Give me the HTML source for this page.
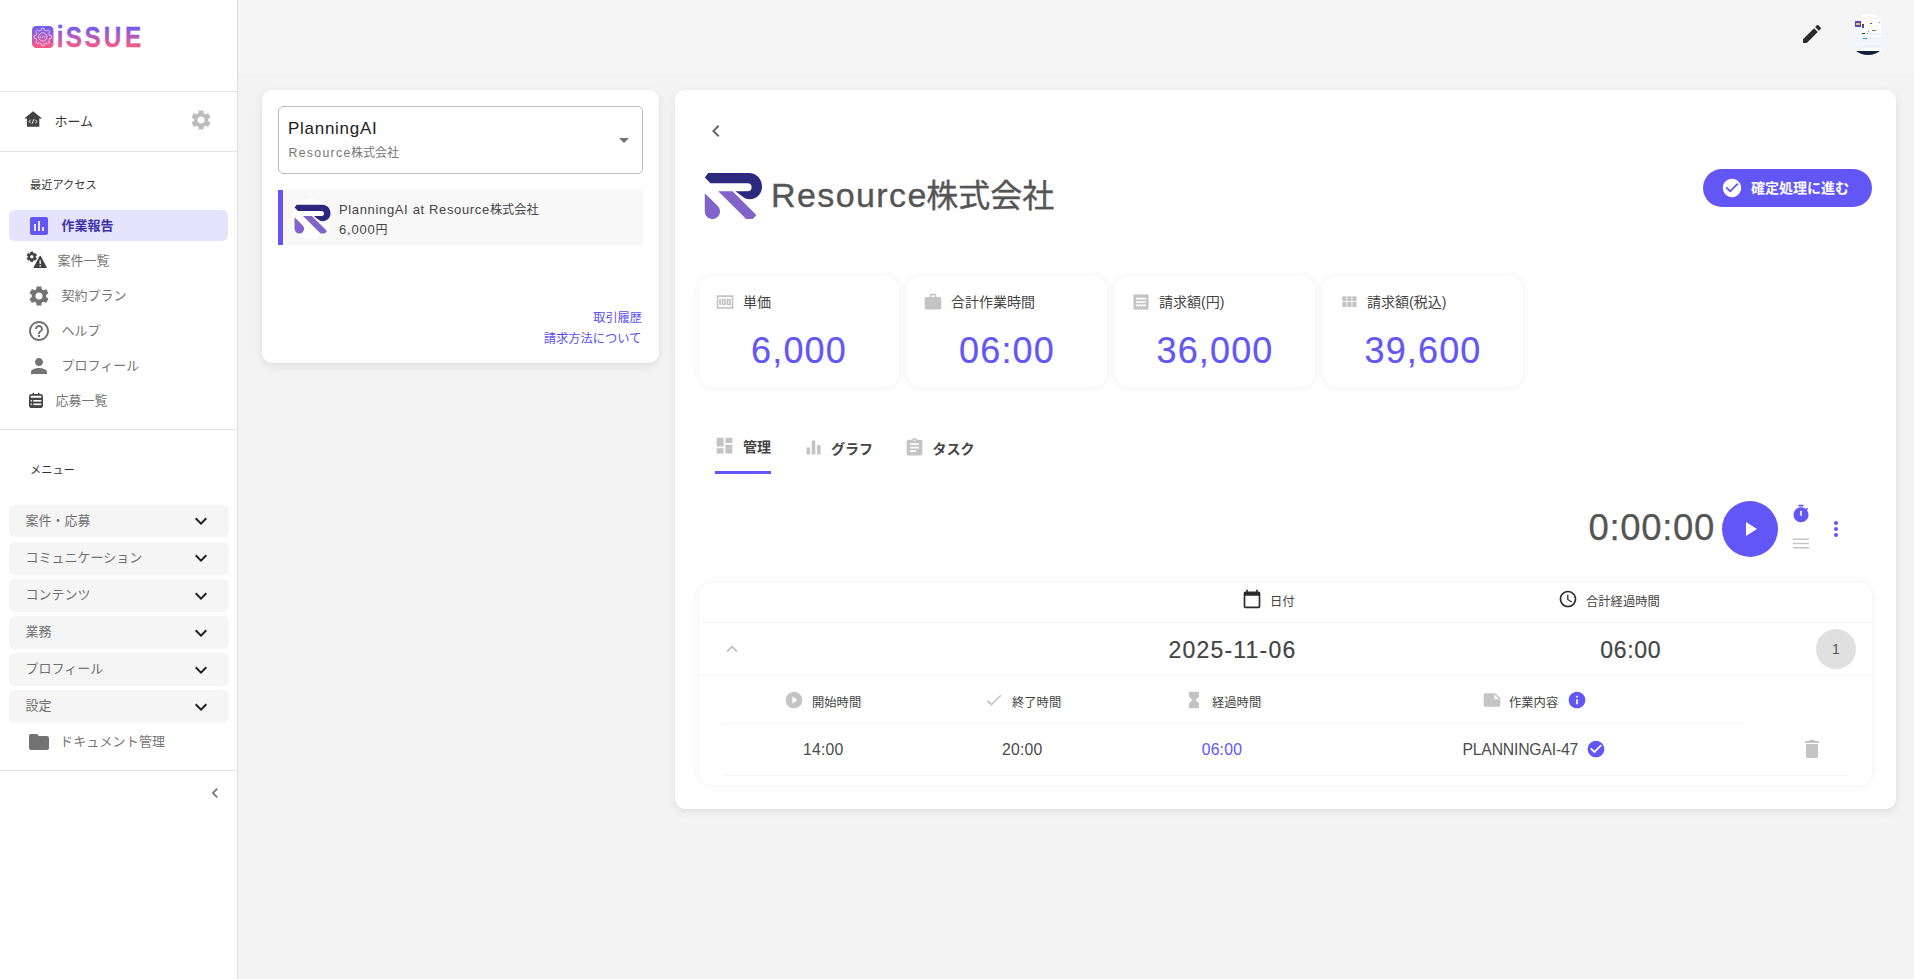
<!DOCTYPE html>
<html lang="ja">
<head>
<meta charset="utf-8">
<title>作業報告 - iSSUE</title>
<style>
*{box-sizing:border-box;margin:0;padding:0}
html,body{width:1914px;height:979px;overflow:hidden}
body{background:#f3f3f3;font-family:"Liberation Sans","Noto Sans CJK JP",sans-serif;color:#555;position:relative;-webkit-font-smoothing:antialiased}
.abs{position:absolute}
.t{position:absolute;white-space:nowrap;line-height:1}
svg{display:block}
.ic{position:absolute}
/* sidebar */
#side{position:absolute;left:0;top:0;width:238px;height:979px;background:#fff;border-right:1px solid #e0e0e0}
.hr{position:absolute;left:0;width:237px;height:1px;background:#e2e2e2}
.nav{position:absolute;margin-top:1px;margin-left:.5px;font-size:13px;color:#757575;white-space:nowrap;line-height:1}
.acc{position:absolute;left:9px;width:220px;height:32.8px;background:#f5f5f5;border-radius:6px}
.acc span{position:absolute;left:16.5px;top:9px;font-size:13px;line-height:1;color:#707070;white-space:nowrap}
.acc svg{position:absolute;left:180.3px;top:4.6px}
/* topbar */
#top{position:absolute;left:238px;top:0;width:1676px;height:74px;background:#f5f5f5}
/* cards */
.card{position:absolute;background:#fff;border-radius:10px;box-shadow:0 3px 9px rgba(60,70,90,.10),0 1px 2px rgba(60,70,90,.03)}
.stat{position:absolute;width:200px;height:111px;background:#fff;border-radius:14px;box-shadow:0 0 10px rgba(0,0,0,.06)}
.stat .lb{position:absolute;left:44px;top:19px;font-size:14px;line-height:1;color:#444;white-space:nowrap}
.stat .v{position:absolute;left:0px;width:200px;top:56.5px;text-align:center;font-size:36px;line-height:1;color:#6356f7;letter-spacing:1.15px;-webkit-text-stroke:.2px #6356f7}
.stat svg{position:absolute;left:16px;top:16px}
.tab{position:absolute;font-size:14px;font-weight:bold;color:#444;line-height:1;white-space:nowrap}
.th{position:absolute;font-size:12.3px;color:#444;line-height:1;white-space:nowrap}
.td{position:absolute;font-size:15.75px;color:#4c4c4c;line-height:1;white-space:nowrap}
.ln{position:absolute;height:1px;background:#f7f7f7}
</style>
</head>
<body>
<!-- TOPBAR -->
<div id="top">
  <svg class="ic" style="left:1562px;top:22px" width="24" height="24" viewBox="0 0 24 24"><path fill="#2b2b2b" d="M3 17.250V21h3.750L17.810 9.940l-3.750-3.750L3 17.250zM20.710 7.040c.390-.390.390-1.020 0-1.410l-2.340-2.340c-.390-.390-1.020-.390-1.410 0l-1.830 1.830 3.750 3.750 1.830-1.830z"/></svg>
  <div class="abs" style="left:1610px;top:14px;width:40px;height:41px;border-radius:50%;background:#f2f5f9;overflow:hidden">
    <div class="abs" style="left:13.500px;top:0;width:19.500px;height:37px;background:#fff"></div>
    <div class="abs" style="left:13.500px;top:3.500px;width:19.500px;height:1px;background:#f0f4f8"></div>
    <div class="abs" style="left:13.500px;top:19px;width:19.500px;height:1.500px;background:#f0f4f8"></div>
    <div class="abs" style="left:13.500px;top:23px;width:19.500px;height:5.500px;background:#f0f4f8"></div>
    <div class="abs" style="left:13.500px;top:30px;width:19.500px;height:4px;background:#f0f4f8"></div>
    <div class="abs" style="left:6.800px;top:7px;width:6.200px;height:6px;background:#5a3fd6"></div>
    <div class="abs" style="left:8px;top:9.300px;width:4px;height:2px;background:#f5c342"></div>
    <div class="abs" style="left:14px;top:11px;width:2px;height:2.500px;background:#555"></div>
    <div class="abs" style="left:21.500px;top:9px;width:2px;height:1px;background:#666"></div>
    <div class="abs" style="left:14px;top:9.500px;width:1.500px;height:1px;background:#444"></div>
    <div class="abs" style="left:31px;top:8px;width:1.200px;height:1.200px;background:#7a5cf0"></div>
    <div class="abs" style="left:19.500px;top:17px;width:1.500px;height:1.200px;background:#e8452c"></div>
    <div class="abs" style="left:24px;top:16px;width:3.500px;height:1px;background:#777"></div>
    <div class="abs" style="left:14px;top:19px;width:2.500px;height:1.200px;background:#333"></div>
    <div class="abs" style="left:18.500px;top:19px;width:1.500px;height:1px;background:#999"></div>
    <div class="abs" style="left:15px;top:24px;width:3.500px;height:1.200px;background:#1aa3f5"></div>
    <div class="abs" style="left:0;top:36.800px;width:40px;height:6px;background:#13203a"></div>
  </div>
</div>
<!-- SIDEBAR -->
<div id="side">
  <div id="logo">
    <svg class="ic" style="left:32px;top:26px" width="22" height="22" viewBox="0 0 22 22">
      <defs><linearGradient id="lg" x1="0" y1="0" x2="0" y2="1"><stop offset="0" stop-color="#6a5cf7"/><stop offset="1" stop-color="#ff5a83"/></linearGradient></defs>
      <rect x="0" y="0" width="21.500" height="22" rx="4.200" fill="url(#lg)"/>
      <path d="M9.25 4.18L9.51 2.30A8.7 8.7 0 0 1 12.09 2.30L12.35 4.18A6.9 6.9 0 0 1 14.46 5.05L15.97 3.91A8.7 8.7 0 0 1 17.79 5.73L16.65 7.24A6.9 6.9 0 0 1 17.52 9.35L19.40 9.61A8.7 8.7 0 0 1 19.40 12.19L17.52 12.45A6.9 6.9 0 0 1 16.65 14.56L17.79 16.07A8.7 8.7 0 0 1 15.97 17.89L14.46 16.75A6.9 6.9 0 0 1 12.35 17.62L12.09 19.50A8.7 8.7 0 0 1 9.51 19.50L9.25 17.62A6.9 6.9 0 0 1 7.14 16.75L5.63 17.89A8.7 8.7 0 0 1 3.81 16.07L4.95 14.56A6.9 6.9 0 0 1 4.08 12.45L2.20 12.19A8.7 8.7 0 0 1 2.20 9.61L4.08 9.35A6.9 6.9 0 0 1 4.95 7.24L3.81 5.73A8.7 8.7 0 0 1 5.63 3.91L7.14 5.05A6.9 6.9 0 0 1 9.25 4.18z" fill="none" stroke="#fff" stroke-opacity=".85" stroke-width=".75" stroke-linejoin="round"/>
      <circle cx="10.800" cy="10.900" r="4.200" fill="none" stroke="#fff" stroke-opacity=".85" stroke-width=".750"/>
      <path d="M9.300 9.800L8.200 10.900l1.100 1.100M12.300 9.800l1.100 1.100-1.100 1.100M11.300 9.500L10.300 12.300" fill="none" stroke="#fff" stroke-opacity=".85" stroke-width=".600"/>
    </svg>
    <svg class="ic" style="left:50px;top:20px" width="100" height="34" viewBox="0 0 100 34">
      <defs><linearGradient id="lg2" x1="0" y1="6" x2="0" y2="28" gradientUnits="userSpaceOnUse"><stop offset="0" stop-color="#6a5cf7"/><stop offset="1" stop-color="#ff5a83"/></linearGradient></defs>
      <text transform="scale(0.82,1)" x="8.29 19.09 42.14 65.6 91.4" y="27.5" font-family="'Liberation Sans',sans-serif" font-weight="bold" font-size="29.6" fill="url(#lg2)" stroke="url(#lg2)" stroke-width=".4" stroke-linejoin="round">iSSUE</text>
    </svg>
  </div>
  <div class="hr" style="top:91px"></div>
  <div id="home">
    <svg class="ic" style="left:23px;top:109px" width="20" height="20" viewBox="0 0 20 20">
      <path d="M10 2.200L1.200 9.500h2.700V17.800h12.400V9.500h2.900z" fill="#424242"/>
      <path d="M7.800 10.700L6 12.500l1.800 1.800M12.200 10.700l1.800 1.800-1.800 1.800M10.800 10.300L9.200 14.700" fill="none" stroke="#fff" stroke-width="1"/>
    </svg>
    <div class="t" style="left:54.500px;top:115px;font-size:13px;color:#333">ホーム</div>
    <svg class="ic" style="left:189px;top:108px" width="24" height="24" viewBox="0 0 24 24"><path fill="#bdbdbd" d="M19.14 12.94c.04-.3.06-.61.06-.94 0-.32-.02-.64-.07-.94l2.03-1.58c.18-.14.23-.41.12-.61l-1.92-3.32c-.12-.22-.37-.29-.59-.22l-2.39.96c-.5-.38-1.03-.7-1.62-.94l-.36-2.54c-.04-.24-.24-.41-.48-.41h-3.84c-.24 0-.43.17-.47.41l-.36 2.54c-.59.24-1.13.57-1.62.94l-2.39-.96c-.22-.08-.47 0-.59.22L2.74 8.87c-.12.21-.08.47.12.61l2.03 1.58c-.05.3-.09.63-.09.94s.02.64.07.94l-2.03 1.58c-.18.14-.23.41-.12.61l1.92 3.32c.12.22.37.29.59.22l2.39-.96c.5.38 1.03.7 1.62.94l.36 2.54c.05.24.24.41.48.41h3.84c.24 0 .44-.17.47-.41l.36-2.54c.59-.24 1.13-.56 1.62-.94l2.39.96c.22.08.47 0 .59-.22l1.92-3.32c.12-.22.07-.47-.12-.61l-2.01-1.58zM12 15.6c-1.98 0-3.6-1.62-3.6-3.6s1.62-3.6 3.6-3.6 3.6 1.62 3.6 3.6-1.62 3.6-3.6 3.6z"/></svg>
  </div>
  <div class="hr" style="top:151px"></div>
  <div id="recent">
    <div class="t" style="left:30px;top:179.500px;font-size:11.200px;color:#333">最近アクセス</div>
    <div class="abs" style="left:9px;top:210px;width:219px;height:31px;background:#e6e4fc;border-radius:6px"></div>
    <svg class="ic" style="left:27px;top:214px" width="24" height="24" viewBox="0 0 24 24"><path fill="#6356f7" d="M19 3H5c-1.1 0-2 .9-2 2v14c0 1.1.9 2 2 2h14c1.1 0 2-.9 2-2V5c0-1.1-.9-2-2-2zM9 17H7v-7h2v7zm4 0h-2V7h2v10zm4 0h-2v-4h2v4z"/></svg>
    <div class="nav" style="left:61px;top:218px;color:#3b32a8;font-weight:bold">作業報告</div>
    <svg class="ic" style="left:26px;top:251px" width="22" height="20" viewBox="0 0 22 20">
      <g transform="translate(-.2,-.2) scale(.5)"><path fill="#424242" stroke="#424242" stroke-width="1.6" d="M19.14 12.94c.04-.3.06-.61.06-.94 0-.32-.02-.64-.07-.94l2.03-1.58c.18-.14.23-.41.12-.61l-1.92-3.32c-.12-.22-.37-.29-.59-.22l-2.39.96c-.5-.38-1.03-.7-1.62-.94l-.36-2.54c-.04-.24-.24-.41-.48-.41h-3.84c-.24 0-.43.17-.47.41l-.36 2.54c-.59.24-1.13.57-1.62.94l-2.39-.96c-.22-.08-.47 0-.59.22L2.74 8.87c-.12.21-.08.47.12.61l2.03 1.58c-.05.3-.09.63-.09.94s.02.64.07.94l-2.03 1.58c-.18.14-.23.41-.12.61l1.92 3.32c.12.22.37.29.59.22l2.39-.96c.5.38 1.03.7 1.62.94l.36 2.54c.05.24.24.41.48.41h3.84c.24 0 .44-.17.47-.41l.36-2.54c.59-.24 1.13-.56 1.62-.94l2.39.96c.22.08.47 0 .59-.22l1.92-3.32c.12-.22.07-.47-.12-.61l-2.01-1.58zM12 15.6c-1.98 0-3.6-1.62-3.6-3.6s1.62-3.6 3.6-3.6 3.6 1.62 3.6 3.6-1.62 3.6-3.6 3.6z"/></g>
      <circle cx="5.800" cy="5.800" r="1.500" fill="#fff"/>
      <path fill="#424242" stroke="#424242" stroke-width="1.200" stroke-linejoin="round" d="M14.200 5.300L20.200 16.500H8.200z"/>
      <path d="M14.200 9.200v3.800M14.200 14.100v1.400" stroke="#fff" stroke-width="1.300" fill="none"/>
    </svg>
    <div class="nav" style="left:57px;top:253px">案件一覧</div>
    <svg class="ic" style="left:27px;top:284px" width="24" height="24" viewBox="0 0 24 24"><path fill="#737373" d="M19.14 12.94c.04-.3.06-.61.06-.94 0-.32-.02-.64-.07-.94l2.03-1.58c.18-.14.23-.41.12-.61l-1.92-3.32c-.12-.22-.37-.29-.59-.22l-2.39.96c-.5-.38-1.03-.7-1.62-.94l-.36-2.54c-.04-.24-.24-.41-.48-.41h-3.84c-.24 0-.43.17-.47.41l-.36 2.54c-.59.24-1.13.57-1.62.94l-2.39-.96c-.22-.08-.47 0-.59.22L2.74 8.87c-.12.21-.08.47.12.61l2.03 1.58c-.05.3-.09.63-.09.94s.02.64.07.94l-2.03 1.58c-.18.14-.23.41-.12.61l1.92 3.32c.12.22.37.29.59.22l2.39-.96c.5.38 1.03.7 1.62.94l.36 2.54c.05.24.24.41.48.41h3.84c.24 0 .44-.17.47-.41l.36-2.54c.59-.24 1.13-.56 1.62-.94l2.39.96c.22.08.47 0 .59-.22l1.92-3.32c.12-.22.07-.47-.12-.61l-2.01-1.58zM12 15.6c-1.98 0-3.6-1.62-3.6-3.6s1.62-3.6 3.6-3.6 3.6 1.62 3.6 3.6-1.62 3.6-3.6 3.6z"/></svg>
    <div class="nav" style="left:61px;top:288px">契約プラン</div>
    <svg class="ic" style="left:27px;top:319px" width="24" height="24" viewBox="0 0 24 24"><path fill="#737373" d="M11 18h2v-2h-2v2zm1-16C6.48 2 2 6.48 2 12s4.48 10 10 10 10-4.48 10-10S17.52 2 12 2zm0 18c-4.41 0-8-3.59-8-8s3.59-8 8-8 8 3.590 8 8-3.590 8-8 8zm0-14c-2.210 0-4 1.790-4 4h2c0-1.100.900-2 2-2s2 .900 2 2c0 2-3 1.750-3 5h2c0-2.250 3-2.500 3-5 0-2.210-1.790-4-4-4z"/></svg>
    <div class="nav" style="left:61px;top:323px">ヘルプ</div>
    <svg class="ic" style="left:27px;top:354px" width="24" height="24" viewBox="0 0 24 24"><path fill="#737373" d="M12 12c2.210 0 4-1.790 4-4s-1.790-4-4-4-4 1.790-4 4 1.790 4 4 4zm0 2c-2.670 0-8 1.340-8 4v2h16v-2c0-2.660-5.330-4-8-4z"/></svg>
    <div class="nav" style="left:61px;top:358px">プロフィール</div>
    <svg class="ic" style="left:28px;top:392px" width="16" height="17" viewBox="0 0 16 17">
      <rect x="1" y="2" width="14" height="14" rx="2.800" fill="#454545"/>
      <rect x="4.600" y=".800" width="1.500" height="2.500" fill="#454545"/><rect x="9.900" y=".800" width="1.500" height="2.500" fill="#454545"/>
      <rect x="2.700" y="3.700" width="10.600" height="2.100" rx=".600" fill="#fff"/>
      <rect x="2.700" y="8" width="1.200" height="1.600" fill="#fff"/><rect x="5.300" y="8" width="8" height="1.600" fill="#fff"/>
      <rect x="2.700" y="11.500" width="1.200" height="1.600" fill="#fff"/><rect x="5.300" y="11.500" width="8" height="1.600" fill="#fff"/>
    </svg>
    <div class="nav" style="left:55px;top:393px">応募一覧</div>
  </div>
  <div class="hr" style="top:429px"></div>
  <div id="menu">
    <div class="t" style="left:30px;top:465px;font-size:11.200px;color:#333">メニュー</div>
    <div class="acc" style="top:504.7px"><span>案件・応募</span><svg width="24" height="24" viewBox="0 0 24 24"><path fill="#222" d="M16.590 8.590L12 13.170 7.410 8.590 6 10l6 6 6-6z"/></svg></div>
    <div class="acc" style="top:541.82px"><span>コミュニケーション</span><svg width="24" height="24" viewBox="0 0 24 24"><path fill="#222" d="M16.590 8.590L12 13.170 7.410 8.590 6 10l6 6 6-6z"/></svg></div>
    <div class="acc" style="top:578.94px"><span>コンテンツ</span><svg width="24" height="24" viewBox="0 0 24 24"><path fill="#222" d="M16.590 8.590L12 13.170 7.410 8.590 6 10l6 6 6-6z"/></svg></div>
    <div class="acc" style="top:616.06px"><span>業務</span><svg width="24" height="24" viewBox="0 0 24 24"><path fill="#222" d="M16.590 8.590L12 13.170 7.410 8.590 6 10l6 6 6-6z"/></svg></div>
    <div class="acc" style="top:653.18px"><span>プロフィール</span><svg width="24" height="24" viewBox="0 0 24 24"><path fill="#222" d="M16.590 8.590L12 13.170 7.410 8.590 6 10l6 6 6-6z"/></svg></div>
    <div class="acc" style="top:690.3px"><span>設定</span><svg width="24" height="24" viewBox="0 0 24 24"><path fill="#222" d="M16.590 8.590L12 13.170 7.410 8.590 6 10l6 6 6-6z"/></svg></div>
    <svg class="ic" style="left:27px;top:730px" width="24" height="24" viewBox="0 0 24 24"><path fill="#737373" d="M10 4H4c-1.100 0-1.990.900-1.990 2L2 18c0 1.100.900 2 2 2h16c1.100 0 2-.900 2-2V8c0-1.100-.900-2-2-2h-8l-2-2z"/></svg>
    <div class="nav" style="left:59.500px;top:734px;letter-spacing:.15px">ドキュメント管理</div>
  </div>
  <div class="hr" style="top:770px"></div>
  <div id="collapse"><svg class="ic" style="left:205.3px;top:783.3px" width="20" height="20" viewBox="0 0 24 24"><path fill="#737373" d="M15.410 7.410L14 6l-6 6 6 6 1.410-1.410L10.830 12z"/></svg></div>
</div>
<!-- LEFT CARD -->
<div class="card" id="lcard" style="left:262px;top:90px;width:397px;height:273px">
  <div class="abs" style="left:16px;top:16px;width:365px;height:68px;border:1px solid #bdbdbd;border-radius:5px"></div>
  <div class="t" style="left:26px;top:30px;font-size:17px;color:#222;letter-spacing:.72px">PlanningAI</div>
  <div class="t" style="left:26.5px;top:57px;font-size:12.3px;color:#777"><span style="letter-spacing:1.3px">Resource</span><span style="font-size:12px;margin-left:-.5px">株式会社</span></div>
  <svg class="ic" style="left:350px;top:38px" width="24" height="24" viewBox="0 0 24 24"><path fill="#737373" d="M7 10l5 5 5-5z"/></svg>
  <div class="abs" style="left:16px;top:100px;width:365px;height:55px;background:#f8f8f8;border-left:5px solid #6356f7"></div>
  <div class="abs" style="left:29px;top:109px;width:40px;height:40px;border-radius:50%;background:#fff"></div>
  <svg class="ic" style="left:32px;top:114px" width="37.8" height="30.2" viewBox="0 0 60 48"><path fill="#2c287e" d="M0.800 5.500L4.200 1.100H44.500C53 1.100 58 7.500 58 14.800C58 22 52.500 27.300 45.600 27.300C42.500 27.300 40.200 25.800 38.500 24.500L31.400 19.200H43.600A4 4 0 0 0 43.600 11.200H6.400z"/><path fill="#8264c8" d="M14.200 19.200H28.500L52.400 43L48.900 46.900H42.100z"/><path fill="#8264c8" d="M0.800 21.200L13.800 34.100A7.600 7.600 0 1 1 0.800 39.400z"/></svg>
  <div class="t" style="left:77px;top:113px;font-size:13px;color:#444"><span style="letter-spacing:.65px">PlanningAI at Resource</span><span style="font-size:12.2px">株式会社</span></div>
  <div class="t" style="left:77px;top:133px;font-size:13px;color:#444"><span style="letter-spacing:.8px">6,000</span><span style="font-size:12px">円</span></div>
  <div class="t" style="right:17px;top:222px;font-size:12.2px;color:#5b4ff0">取引履歴</div>
  <div class="t" style="right:17.5px;top:243px;font-size:12.25px;color:#5b4ff0">請求方法について</div>
</div>
<!-- RIGHT CARD -->
<div class="card" id="rcard" style="left:675px;top:90px;width:1221px;height:719px">
  <svg class="ic" style="left:29px;top:29px" width="24" height="24" viewBox="0 0 24 24"><path fill="#666" d="M15.410 7.410L14 6l-6 6 6 6 1.410-1.410L10.830 12z"/></svg>
  <svg class="ic" style="left:29px;top:82px" width="60" height="48" viewBox="0 0 60 48"><path fill="#2c287e" d="M0.800 5.500L4.200 1.100H44.500C53 1.100 58 7.500 58 14.800C58 22 52.500 27.300 45.600 27.300C42.500 27.300 40.200 25.800 38.500 24.500L31.400 19.200H43.600A4 4 0 0 0 43.600 11.200H6.400z"/><path fill="#8264c8" d="M14.200 19.200H28.500L52.400 43L48.900 46.900H42.100z"/><path fill="#8264c8" d="M0.800 21.200L13.800 34.100A7.600 7.600 0 1 1 0.800 39.400z"/></svg>
  <div class="t" style="left:96px;top:87.5px;font-size:34px;color:#555;-webkit-text-stroke:.35px #555"><span style="letter-spacing:1.4px">Resource</span><span style="font-size:32px;margin-left:-1.5px">株式会社</span></div>
  <div class="abs" style="left:1028px;top:79px;width:169px;height:38px;border-radius:19px;background:#6356f7"></div>
  <svg class="ic" style="left:1046px;top:87px" width="22" height="22" viewBox="0 0 24 24"><path fill="#fff" d="M12 2C6.480 2 2 6.480 2 12s4.480 10 10 10 10-4.480 10-10S17.520 2 12 2zm-2 15l-5-5 1.410-1.410L10 14.170l7.590-7.590L19 8l-9 9z"/></svg>
  <div class="t" style="left:1076px;top:91px;font-size:14px;font-weight:bold;color:#fff">確定処理に進む</div>
  <div class="stat" style="left:24px;top:186px"><svg width="20" height="20" viewBox="0 0 24 24"><path fill="#c4c4c4" d="M5 8h2v8H5zm7 0H9c-.550 0-1 .450-1 1v6c0 .550.450 1 1 1h3c.550 0 1-.450 1-1V9c0-.550-.450-1-1-1zm-1 6h-1v-4h1v4zm7-6h-3c-.550 0-1 .450-1 1v6c0 .550.450 1 1 1h3c.550 0 1-.450 1-1V9c0-.550-.450-1-1-1zm-1 6h-1v-4h1v4zM2 4v16h20V4H2zm2 14V6h16v12H4z"/></svg><div class="lb">単価</div><div class="v">6,000</div></div>
  <div class="stat" style="left:232px;top:186px"><svg width="20" height="20" viewBox="0 0 24 24"><path fill="#c4c4c4" d="M20 6h-4V4c0-1.110-.890-2-2-2h-4c-1.110 0-2 .890-2 2v2H4c-1.110 0-1.990.890-1.990 2L2 19c0 1.110.890 2 2 2h16c1.110 0 2-.890 2-2V8c0-1.110-.890-2-2-2zm-6 0h-4V4h4v2z"/></svg><div class="lb">合計作業時間</div><div class="v">06:00</div></div>
  <div class="stat" style="left:440px;top:186px"><svg width="20" height="20" viewBox="0 0 24 24"><path fill="#c4c4c4" d="M18 17H6v-2h12v2zm0-4H6v-2h12v2zm0-4H6V7h12v2zM3 22l1.500-1.500L6 22l1.500-1.500L9 22l1.500-1.500L12 22l1.500-1.500L15 22l1.500-1.500L18 22l1.500-1.500L21 22V2l-1.500 1.500L18 2l-1.500 1.500L15 2l-1.500 1.500L12 2l-1.500 1.500L9 2 7.500 3.500 6 2 4.500 3.500 3 2v20z"/></svg><div class="lb">請求額(円)</div><div class="v">36,000</div></div>
  <div class="stat" style="left:648px;top:186px"><svg width="20" height="20" viewBox="0 0 24 24"><path fill="#c4c4c4" d="M4 11h5V5H4v6zm0 7h5v-6H4v6zm6 0h5v-6h-5v6zm6 0h5v-6h-5v6zm-6-7h5V5h-5v6zm6-6v6h5V5h-5z"/></svg><div class="lb">請求額(税込)</div><div class="v">39,600</div></div>
  <svg class="ic" style="left:39.39999999999998px;top:344.5px" width="21" height="21" viewBox="0 0 24 24"><path fill="#c4c4c4" d="M3 13h8V3H3v10zm0 8h8v-6H3v6zm10 0h8V11h-8v10zm0-18v6h8V3h-8z"/></svg>
  <div class="tab" style="left:68px;top:350px">管理</div>
  <div class="abs" style="left:40px;top:381px;width:56px;height:3px;background:#6356f7"></div>
  <svg class="ic" style="left:127.60000000000002px;top:346.5px" width="21" height="21" viewBox="0 0 24 24"><path fill="#c4c4c4" d="M10 20h4V4h-4v16zm-6 0h4v-8H4v8zM16 9v11h4V9h-4z"/></svg>
  <div class="tab" style="left:156px;top:352px">グラフ</div>
  <svg class="ic" style="left:229.39999999999998px;top:346.8px" width="21" height="21" viewBox="0 0 24 24"><path fill="#c4c4c4" d="M19 3h-4.180C14.400 1.840 13.300 1 12 1c-1.300 0-2.400.840-2.820 2H5c-1.100 0-2 .900-2 2v14c0 1.100.900 2 2 2h14c1.100 0 2-.900 2-2V5c0-1.100-.900-2-2-2zm-7 0c.550 0 1 .450 1 1s-.450 1-1 1-1-.450-1-1 .450-1 1-1zm2 14H7v-2h7v2zm3-4H7v-2h10v2zm0-4H7V7h10v2z"/></svg>
  <div class="tab" style="left:257.5px;top:352px">タスク</div>
  <div class="t" style="left:913.5px;top:419.5px;font-size:36.5px;color:#555;letter-spacing:.65px;-webkit-text-stroke:.25px #555">0:00:00</div>
  <div class="abs" style="left:1047px;top:411px;width:56px;height:56px;border-radius:50%;background:#6356f7"></div>
  <svg class="ic" style="left:1063px;top:427px" width="24" height="24" viewBox="0 0 24 24"><path fill="#fff" d="M8 5v14l11-7z"/></svg>
  <svg class="ic" style="left:1116px;top:414px" width="20" height="20" viewBox="0 0 24 24"><path fill="#6356f7" d="M9 1h6v2H9zm10.030 6.390l1.420-1.420c-.430-.510-.900-.990-1.410-1.410l-1.420 1.420C16.070 4.740 14.120 4 12 4c-4.970 0-9 4.030-9 9s4.020 9 9 9 9-4.030 9-9c0-2.120-.740-4.070-1.970-5.610zM13 14h-2V8h2v6z"/></svg>
  <svg class="ic" style="left:1117px;top:448px" width="18" height="12" viewBox="0 0 18 12"><path d="M0.800 1.300h16.200M0.800 5.550h16.200M0.800 9.750h16.200" stroke="#c6c6c6" stroke-width="1.400"/></svg>
  <svg class="ic" style="left:1149px;top:427px" width="24" height="24" viewBox="0 0 24 24"><path fill="#6356f7" d="M12 8c1.100 0 2-.900 2-2s-.900-2-2-2-2 .900-2 2 .900 2 2 2zm0 2c-1.100 0-2 .900-2 2s.900 2 2 2 2-.900 2-2-.900-2-2-2zm0 6c-1.100 0-2 .900-2 2s.900 2 2 2 2-.900 2-2-.900-2-2-2z"/></svg>
  <div class="abs" style="left:24px;top:493px;width:1173px;height:202px;border-radius:14px;background:#fff;box-shadow:0 0 10px rgba(0,0,0,.06)"></div>
  <div class="ln" style="left:24px;top:532.3px;width:1173px"></div>
  <div class="ln" style="left:24px;top:585.3px;width:1173px"></div>
  <div class="ln" style="left:48px;top:633px;width:1023px"></div>
  <div class="ln" style="left:48px;top:685px;width:1125px"></div>
  <svg class="ic" style="left:567px;top:499px" width="20" height="20" viewBox="0 0 24 24"><path fill="#2b2b2b" d="M20 3h-1V1h-2v2H7V1H5v2H4c-1.100 0-2 .900-2 2v16c0 1.100.900 2 2 2h16c1.100 0 2-.900 2-2V5c0-1.100-.900-2-2-2zm0 18H4V8h16v13z"/></svg>
  <div class="th" style="left:595px;top:506.0px">日付</div>
  <svg class="ic" style="left:883.3px;top:499.3px" width="20" height="20" viewBox="0 0 24 24"><path fill="#2b2b2b" d="M11.990 2C6.470 2 2 6.480 2 12s4.470 10 9.990 10C17.520 22 22 17.520 22 12S17.520 2 11.990 2zM12 20c-4.420 0-8-3.580-8-8s3.580-8 8-8 8 3.580 8 8-3.580 8-8 8zm.500-13H11v6l5.250 3.150.750-1.230-4.500-2.670z"/></svg>
  <div class="th" style="left:911px;top:506.0px">合計経過時間</div>
  <svg class="ic" style="left:46px;top:548px" width="22" height="22" viewBox="0 0 24 24"><path fill="#c4c4c4" d="M12 8l-6 6 1.410 1.410L12 10.830l4.590 4.580L18 14z"/></svg>
  <div class="t" style="left:493.5px;top:549.0px;font-size:23px;color:#444;letter-spacing:1.2px;-webkit-text-stroke:.2px #444">2025-11-06</div>
  <div class="t" style="left:925.2px;top:549.0px;font-size:23px;color:#444;letter-spacing:.7px;-webkit-text-stroke:.2px #444">06:00</div>
  <div class="abs" style="left:1141px;top:539px;width:40px;height:40px;border-radius:50%;background:#e0e0e0;text-align:center;line-height:40px;font-size:14px;color:#555">1</div>
  <svg class="ic" style="left:109px;top:600px" width="20" height="20" viewBox="0 0 24 24"><path fill="#c4c4c4" d="M12 2C6.480 2 2 6.480 2 12s4.480 10 10 10 10-4.480 10-10S17.520 2 12 2zm-2 14.500v-9l6 4.500-6 4.500z"/></svg>
  <div class="th" style="left:137px;top:607.0px">開始時間</div>
  <svg class="ic" style="left:309.29999999999995px;top:599.7px" width="20" height="20" viewBox="0 0 24 24"><path fill="#c4c4c4" d="M9 16.170L4.830 12l-1.420 1.410L9 19 21 7l-1.410-1.410z"/></svg>
  <div class="th" style="left:337px;top:607.0px">終了時間</div>
  <svg class="ic" style="left:509px;top:600px" width="20" height="20" viewBox="0 0 24 24"><path fill="#c4c4c4" d="M6 2v6h.010L6 8.010 10 12l-4 4 .010.010H6V22h12v-5.990h-.010L18 16l-4-4 4-3.990-.010-.010H18V2H6z"/></svg>
  <div class="th" style="left:537px;top:607.0px">経過時間</div>
  <svg class="ic" style="left:807px;top:600px" width="20" height="20" viewBox="0 0 24 24"><path fill="#c4c4c4" d="M22 10l-6-6H4c-1.100 0-2 .900-2 2v12.010c0 1.100.900 1.990 2 1.990l16-.010c1.100 0 2-.890 2-1.990v-8zm-7-4.500l5.500 5.500H15V5.500z"/></svg>
  <div class="th" style="left:834px;top:607.0px">作業内容</div>
  <svg class="ic" style="left:892.2px;top:600px" width="20" height="20" viewBox="0 0 24 24"><path fill="#6356f7" d="M12 2C6.480 2 2 6.480 2 12s4.480 10 10 10 10-4.480 10-10S17.520 2 12 2zm1 15h-2v-6h2v6zm0-8h-2V7h2v2z"/></svg>
  <div class="td" style="left:128px;top:651.5px;letter-spacing:.2px">14:00</div>
  <div class="td" style="left:327px;top:651.5px;letter-spacing:.2px">20:00</div>
  <div class="td" style="left:526.7px;top:651.5px;letter-spacing:.2px;color:#6356f7">06:00</div>
  <div class="td" style="left:787.5px;top:651.5px;letter-spacing:-.2px">PLANNINGAI-47</div>
  <svg class="ic" style="left:911.2px;top:648.6px" width="20" height="20" viewBox="0 0 24 24"><path fill="#6356f7" d="M12 2C6.480 2 2 6.480 2 12s4.480 10 10 10 10-4.480 10-10S17.520 2 12 2zm-2 15l-5-5 1.410-1.410L10 14.170l7.590-7.590L19 8l-9 9z"/></svg>
  <svg class="ic" style="left:1125px;top:647px" width="24" height="24" viewBox="0 0 24 24"><path fill="#c4c4c4" d="M6 19c0 1.100.900 2 2 2h8c1.100 0 2-.900 2-2V7H6v12zM19 4h-3.500l-1-1h-5l-1 1H5v2h14V4z"/></svg>
</div>
</body>
</html>
